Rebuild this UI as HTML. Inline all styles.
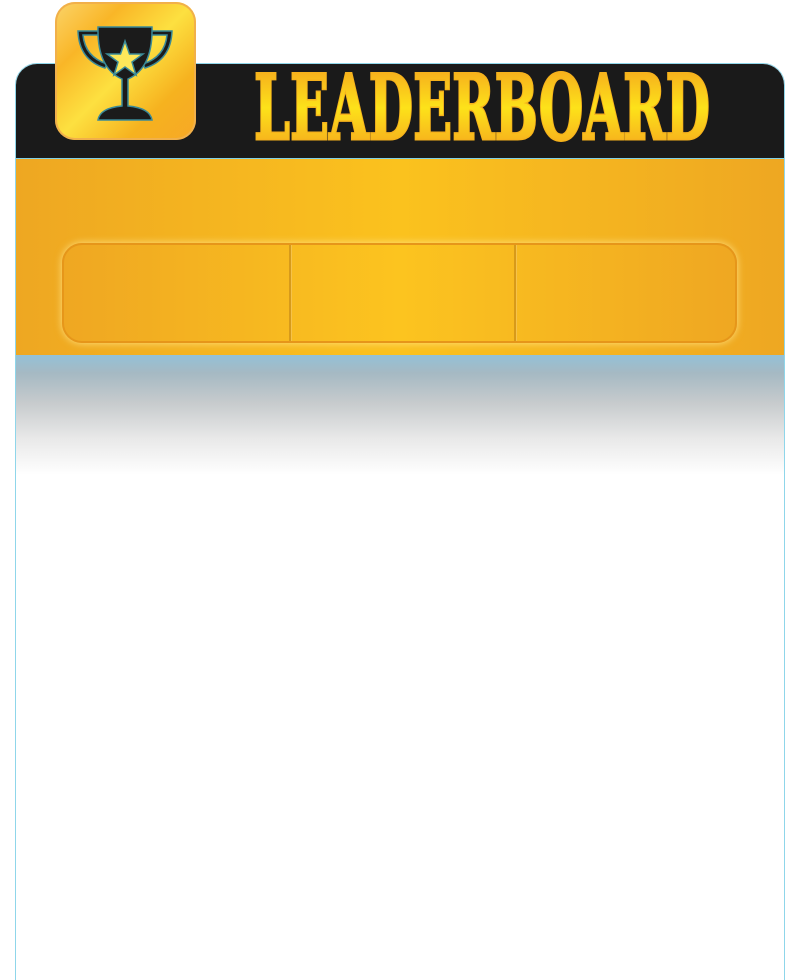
<!DOCTYPE html>
<html><head><meta charset="utf-8"><style>
html,body{margin:0;padding:0;background:#fff;width:800px;height:980px;overflow:hidden;position:relative;font-family:"Liberation Serif",serif}
.panel{position:absolute;left:15px;top:63px;width:768px;height:930px;border:1px solid #8fd6ea;border-radius:22px 22px 0 0;background:#fff;overflow:hidden}
.head{position:absolute;left:0;top:0;width:100%;height:94px;background:#1a1a1a}
.orange{position:absolute;left:0;top:94px;width:100%;height:197px;border-top:1px solid #7fd0e6;background:linear-gradient(90deg,#eea722 0%,#fbc21e 50%,#eea722 100%)}
.fade{position:absolute;left:0;top:291px;width:100%;height:120px;background:linear-gradient(#93c1d7 0%,#a5b9c3 15%,#c7cbcd 40%,#e9e9e9 70%,#fff 100%)}
.btns{position:absolute;left:46px;top:84px;width:671px;height:96px;border:2px solid #e6961a;border-radius:20px;box-shadow:0 0 8px rgba(255,230,140,.9);background:linear-gradient(90deg,#efa722,#fcc41f 50%,#efa722);overflow:hidden}
.div{position:absolute;top:0;width:2px;height:100%;background:#d79a1a;border-right:1px solid #f6c24a}
.icon{position:absolute;left:55px;top:2px;width:141px;height:138px;border-radius:20px;background:linear-gradient(135deg,#fbd46a 0%,#f9b627 25%,#fde040 50%,#f6b21f 75%,#f7a826 100%);box-shadow:inset 0 0 0 2px #f1b04a}
</style></head><body>
<div class="panel">
<div class="head"></div>
<div class="orange">
<div class="btns"><div class="div" style="left:225px"></div><div class="div" style="left:450px"></div></div>
</div>
<div class="fade"></div>
</div>
<svg style="position:absolute;left:0;top:0" width="800" height="160">
<defs><radialGradient id="g" cx=".5" cy=".55" r=".6"><stop offset="0" stop-color="#fffbd0"/><stop offset=".3" stop-color="#fde21a"/><stop offset="1" stop-color="#f39a1e"/></radialGradient>
<linearGradient id="lg" x1="0" y1="0" x2="0" y2="1"><stop offset="0" stop-color="#f39a1e"/><stop offset=".5" stop-color="#fde21a"/><stop offset="1" stop-color="#f39a1e"/></linearGradient></defs>
<text x="254" y="139" font-family="DejaVu Serif" font-weight="bold" font-size="90" textLength="456" lengthAdjust="spacingAndGlyphs" fill="url(#lg)" stroke="#f6b21c" stroke-width="3" paint-order="stroke">LEADERBOARD</text>
</svg>
<div class="icon"></div>
<svg style="position:absolute;left:55px;top:2px" width="141" height="138" viewBox="0 0 141 138">
<g stroke="#3a8a98" stroke-width="1.5">
<path d="M23 29 H44 V33 H28 Q30 55 52 62 L50 66 Q24 58 23 29 Z" fill="#1b1b1b"/>
<path d="M117 29 H96 V33 H112 Q110 55 88 62 L90 66 Q116 58 117 29 Z" fill="#1b1b1b"/>
<path d="M43 25 H97 Q98 66 73 77 L73 104 Q95 106 97 118 H43 Q45 106 67 104 L67 77 Q42 66 43 25 Z" fill="#1b1b1b"/>
</g>
<path d="M70 39 L74.5 52 L88 52 L77 60 L81 73 L70 65 L59 73 L63 60 L52 52 L65.5 52 Z" fill="#fde85a" stroke="#3a8a98" stroke-width="1.5"/>
</svg>
</body></html>
